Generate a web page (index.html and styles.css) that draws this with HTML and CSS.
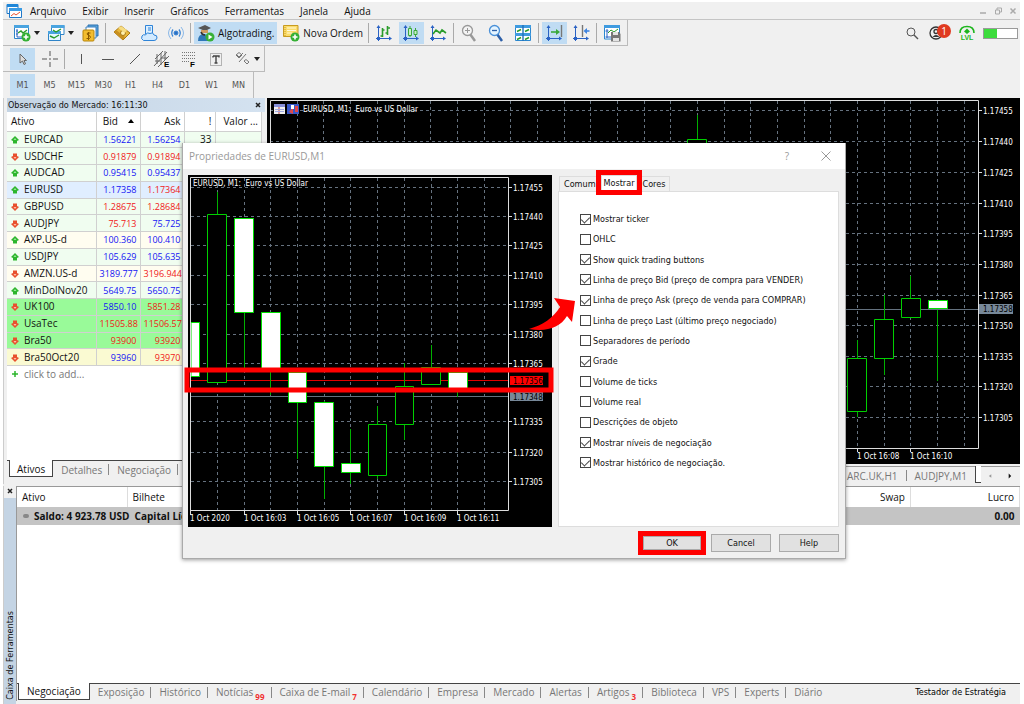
FILE: index.html
```html
<!DOCTYPE html>
<html lang="pt-BR">
<head>
  <meta charset="UTF-8">
  <title>EURUSD,M1</title>
  <link rel="stylesheet" href="styles.css">
</head>
<body>

  <svg class="symbols">
    <symbol id="up" viewBox="0 0 8 8"><path d="M4 0L8 4L6 5V7.500H2V5L0 4Z" fill="#2cb52c"/><path d="M4 2L5.500 4H2.500Z" fill="#9be89b"/></symbol>
    <symbol id="down" viewBox="0 0 8 8"><path d="M4 8L8 4L6 3V.5H2V3L0 4Z" fill="#e8502e"/><path d="M4 6L5.500 4H2.500Z" fill="#ffc0a8"/></symbol>
    <symbol id="caret" viewBox="0 0 6 4"><path d="M0 0H6L3 4Z" fill="#222"/></symbol>
    <symbol id="axes" viewBox="0 0 18 18"><path d="M3.500 2V17M1 14.500H16" stroke="#2a62c4" fill="none"/><path d="M1.500 4L3.500 1L5.500 4ZM14 12.500L17 14.500L14 16.500ZM2 13H5V16H2Z" fill="#2a62c4"/></symbol>
  </svg>

  <div class="app">
    <nav class="menubar">
      <svg class="logo" viewBox="0 0 16 16"><path d="M1 1.500H12V10.500H1Z" fill="#fff" stroke="#1f78c8"/><path d="M1 1H12V4H1Z" fill="#1f86d8"/><path d="M3.500 5.500H15.500V14.500H3.500Z" fill="#fff" stroke="#1f78c8"/><path d="M3 5H16V8H3Z" fill="#3a9be4"/><path d="M5 13L8 10.500L10 12L14 9" stroke="#e85030" fill="none"/></svg>
      <a href="#">Arquivo</a>
      <a href="#">Exibir</a>
      <a href="#">Inserir</a>
      <a href="#">Gráficos</a>
      <a href="#">Ferramentas</a>
      <a href="#">Janela</a>
      <a href="#">Ajuda</a>
      <div class="window-buttons">
        <button aria-label="Minimizar"><svg viewBox="0 0 8 8"><path d="M1 6H7" stroke="#aaa" stroke-width="1.500"/></svg></button>
        <button aria-label="Restaurar"><svg viewBox="0 0 8 8"><path d="M1.500 3H5.500V7H1.500ZM3 3V1H7.500V5H5.500" stroke="#aaa" fill="none"/></svg></button>
        <button aria-label="Fechar"><svg viewBox="0 0 8 8"><path d="M1.500 1.500L6.500 6.500M6.500 1.500L1.500 6.500" stroke="#aaa" stroke-width="1.500"/></svg></button>
      </div>
    </nav>

    <div class="toolbar-row">
      <div class="toolbar">
        <button class="tool drop" aria-label="Novo gráfico">
          <svg viewBox="0 0 18 18"><path d="M1.500 1.500H15.500V14.500H1.500Z" fill="#fff" stroke="#2f84c8"/><path d="M1 1H16V4H1Z" fill="#4aa4e0"/><path d="M4 5V13H9M3 7H5M3 10H5" stroke="#2a62c4" fill="none"/><path d="M5 9L8 7L10 9L14 6" stroke="#2a9c2a" fill="none" stroke-width="1.400"/><circle cx="13" cy="13" r="4.500" fill="#34b034"/><path d="M13 10.500V15.500M10.500 13H15.500" stroke="#fff" stroke-width="1.600"/></svg>
          <svg class="caret"><use href="#caret"/></svg>
        </button>
        <button class="tool drop" aria-label="Perfis">
          <svg viewBox="0 0 18 18"><path d="M4.500 1.500H17V10.500H4.500Z" fill="#fff" stroke="#2f84c8"/><path d="M4 1H17.500V4H4Z" fill="#4aa4e0"/><path d="M1.500 7.500H13.500V16.500H1.500Z" fill="#e6f6ff" stroke="#2f84c8"/><path d="M1 7H14V10H1Z" fill="#4aa4e0"/><path d="M6 6L9 8L14 5M3 12L7 14L12 11" stroke="#2a9c2a" fill="none" stroke-width="1.400"/></svg>
          <svg class="caret"><use href="#caret"/></svg>
        </button>
        <button class="tool" aria-label="Símbolos"><svg viewBox="0 0 18 18"><path d="M6 1H16V12H6Z" fill="#5ba5dc" stroke="#2a70b0"/><path d="M4 3H14V14H4Z" fill="#fff" stroke="#3a80c0"/><rect x="1" y="6" width="11" height="11" rx="1" fill="#f3bd2f" stroke="#b8860b"/><path d="M8.500 9H5.500Q4.500 10 6 11.200L8 12Q9 14 7.500 14.500H4.500M6.500 8V16" stroke="#8a5a00" fill="none"/></svg></button>
        <span class="sep"></span>
        <button class="tool" aria-label="Depósito"><svg viewBox="0 0 18 18"><path d="M1 8L8 2L17 9L10 16Z" fill="#e9b83c" stroke="#a87814"/><path d="M1 8L3 6L12 13L10 16Z" fill="#c99020"/><circle cx="10" cy="9" r="2.500" fill="#fff0b0" stroke="#a87814"/><path d="M5 4L8 2L14 6L12 9" fill="#f6dc82"/></svg></button>
        <button class="tool" aria-label="Nuvem"><svg viewBox="0 0 18 18"><path d="M5.500 1.500H12.500V10H5.500Z" fill="#dcefff" stroke="#2f84d8"/><path d="M8 4H11M8 6H11" stroke="#2f84d8"/><path d="M3.500 16.500Q.5 15 2 12Q3 10 5.500 11Q7 7.500 10 9.500Q13 7.500 14 11Q17.500 11 17 14Q16.500 16.500 14 16.500Z" fill="#d2eaff" stroke="#2f84d8"/></svg></button>
        <button class="tool" aria-label="Sinais"><svg viewBox="0 0 18 18" fill="none" stroke="#3a84d4"><circle cx="9" cy="9" r="2" fill="#2a70c4"/><path d="M6 5.500Q3.500 9 6 12.500M12 5.500Q14.500 9 12 12.500" stroke-width="1.300"/><path d="M4 3Q-1 9 4 15M14 3Q19 9 14 15" stroke="#8ab8e8"/></svg></button>
        <span class="sep"></span>
        <button class="tool wide active">
          <svg viewBox="0 0 18 18"><path d="M1 4L8 1L14 4L8 7Z" fill="#555"/><path d="M4 6V9H11V6" fill="#d09a60"/><path d="M1 17Q1 10 7 10Q12 10 13 17Z" fill="#2f77b8"/><path d="M4 8Q5 11 8 11" stroke="#333" stroke-width="1.500" fill="none"/><circle cx="13" cy="13" r="4.500" fill="#38b038"/><path d="M11.500 10.500L15.500 13L11.500 15.500Z" fill="#fff"/></svg>
          Algotrading.
        </button>
        <button class="tool wide">
          <svg viewBox="0 0 18 18"><path d="M1.500 1.500H16V12.500H1.500Z" fill="#fbdc6a" stroke="#c89b20"/><path d="M5 4H14M5 6.500H14M5 9H10" stroke="#fff8d8"/><path d="M3 3V12" stroke="#c89b20" stroke-dasharray="1 1"/><circle cx="13" cy="13" r="4.500" fill="#34b034"/><path d="M13 10.500V15.500M10.500 13H15.500" stroke="#fff" stroke-width="1.600"/></svg>
          Nova Ordem
        </button>
        <span class="sep"></span>
        <button class="tool" aria-label="Barras"><svg viewBox="0 0 18 18"><use href="#axes"/><path d="M7.500 4V13M5.500 12H7.500M7.500 6H9.500M12.500 2V11M10.500 9H12.500M12.500 4H15" stroke="#2a9c2a" stroke-width="1.600"/></svg></button>
        <button class="tool active" aria-label="Candles"><svg viewBox="0 0 18 18"><use href="#axes"/><path d="M6.500 4.500H9.500V11.500H6.500ZM12 6.500H15V10.500H12ZM8 2V4M8 12V13M13.500 4V6M13.500 11V13" stroke="#3aa83a" fill="#c6f0c6"/></svg></button>
        <button class="tool" aria-label="Linha"><svg viewBox="0 0 18 18"><use href="#axes"/><path d="M4 10L7 6L11 9L13 6L17 9" stroke="#2a9c2a" fill="none" stroke-width="1.600"/></svg></button>
        <span class="sep"></span>
        <button class="tool" aria-label="Ampliar"><svg viewBox="0 0 18 18"><path d="M10 10L15 17" stroke="#999" stroke-width="2.500"/><circle cx="7.500" cy="6.500" r="5" fill="#f4f4f4" stroke="#999" stroke-width="1.300"/><path d="M5 6.500H10M7.500 4V9" stroke="#999"/></svg></button>
        <button class="tool" aria-label="Reduzir"><svg viewBox="0 0 18 18"><path d="M10 10L15 17" stroke="#2c5fa8" stroke-width="2.500"/><circle cx="7.500" cy="6.500" r="5" fill="#e4f4ff" stroke="#4a90d8" stroke-width="1.300"/><path d="M5 6.500H10" stroke="#2c5fa8" stroke-width="1.300"/></svg></button>
        <button class="tool" aria-label="Lado a lado"><svg viewBox="0 0 18 18"><path d="M1.500 1.500H16.500V16.500H1.500Z" fill="#fff" stroke="#2b87d0"/><path d="M1 1H17V4H1ZM1 9H17V12H1Z" fill="#3f9be0"/><path d="M9 1V17" stroke="#2072b8" stroke-width="1.400"/><path d="M3 7.500L7 5.500M11 7.500L15 5.500M3 15.500L7 13.500M11 15.500L15 13.500" stroke="#2a9c2a" stroke-width="1.400"/></svg></button>
        <span class="sep"></span>
        <button class="tool active" aria-label="Rolagem"><svg viewBox="0 0 18 18"><use href="#axes"/><path d="M16.500 1V13" stroke="#777" stroke-width="1.400"/><path d="M6 8H12" stroke="#3aa83a" stroke-width="1.600"/><path d="M11 5L15 8L11 11Z" fill="#3aa83a"/></svg></button>
        <button class="tool" aria-label="Deslocamento"><svg viewBox="0 0 18 18"><use href="#axes"/><path d="M10.500 1V13" stroke="#777" stroke-width="1.400"/><path d="M14 7H17.500" stroke="#3f84e0" stroke-width="1.600"/><path d="M15 4L11.500 7L15 10Z" fill="#3f84e0"/></svg></button>
        <span class="sep"></span>
        <button class="tool" aria-label="Modelos"><svg viewBox="0 0 18 18"><path d="M1.500 1.500H16.500V15H1.500Z" fill="#fff" stroke="#2b87d0"/><path d="M1 1H17V4H1Z" fill="#3f9be0"/><path d="M4 5V14M2.500 7H5.500M2.500 13H8" stroke="#2a62c4"/><path d="M5 9L8 6L11 8L15 5" stroke="#2a9c2a" fill="none"/><path d="M8 8H16L17.500 10V17.500H8Z" fill="#777"/><path d="M10 8H15V11H10ZM10 14H16V17H10Z" fill="#e4e4e4"/></svg></button>
      </div>
      <div class="status">
        <button class="plain" aria-label="Pesquisar"><svg class="search" viewBox="0 0 14 14"><circle cx="6" cy="6" r="4" fill="none" stroke="#555"/><path d="M9 9L13 13" stroke="#555" stroke-width="1.500"/></svg></button>
        <button class="plain profile" aria-label="Mensagens"><svg viewBox="0 0 14 14"><circle cx="7" cy="7" r="6" fill="none" stroke="#333" stroke-width="1.300"/><circle cx="7" cy="5.500" r="2" fill="none" stroke="#333" stroke-width="1.300"/><path d="M3.500 11Q7 7 10.500 11Z" fill="#333"/></svg><span class="badge">1</span></button>
        <div class="level"><svg viewBox="0 0 16 9"><path d="M1 8Q1 1.500 8 1.500Q15 1.500 15 8" fill="none" stroke="#1db51d" stroke-width="1.600"/><path d="M8 3.500L11 6.500L8 9L5 6.500Z" fill="#1db51d"/></svg><span>LVL</span></div>
        <div class="battery"><span></span></div>
      </div>
    </div>

    <div class="toolbar-row">
      <div class="toolbar">
        <button class="tool active" aria-label="Cursor"><svg viewBox="0 0 18 18"><path d="M6 4V13L8.500 11L10 14.500L11.500 13.800L10 10.500H12.500Z" fill="#ddd" stroke="#666"/></svg></button>
        <button class="tool" aria-label="Mira"><svg viewBox="0 0 18 18"><path d="M9 1V6M9 12V17M1 9H6M12 9H17M9 8V10" stroke="#555"/></svg></button>
        <span class="sep"></span>
        <button class="tool" aria-label="Linha vertical"><svg viewBox="0 0 18 18"><path d="M9.500 4V14" stroke="#555"/></svg></button>
        <button class="tool" aria-label="Linha horizontal"><svg viewBox="0 0 18 18"><path d="M3 9.500H15" stroke="#555"/></svg></button>
        <button class="tool" aria-label="Linha de tendência"><svg viewBox="0 0 18 18"><path d="M4 14L14 4" stroke="#555"/></svg></button>
        <button class="tool" aria-label="Canal equidistante"><svg viewBox="0 0 18 18"><path d="M1 16L14 2M2 9L10 1M5 17L16 6M4 4V14M8 3V15M12 1V10M2 11H7M8 8H14" stroke="#666"/><text x="11" y="17" class="tool-letter">E</text></svg></button>
        <button class="tool" aria-label="Fibonacci"><svg viewBox="0 0 18 18"><path d="M2 2.500H15M2 5.500H15M2 8.500H15M2 11.500H9" stroke="#777" stroke-dasharray="1 1"/><text x="10" y="17" class="tool-letter">F</text></svg></button>
        <button class="tool" aria-label="Texto"><svg viewBox="0 0 18 18"><path d="M3.500 3.500H14.500V15.500H3.500Z" fill="none" stroke="#777" stroke-dasharray="1 1"/><path d="M6 6H12V7.500M6 7.500V6M9 6V13M7.500 13H10.500" fill="none" stroke="#444" stroke-width="1.400"/></svg></button>
        <button class="tool drop" aria-label="Objetos"><svg viewBox="0 0 18 18"><path d="M6 12L13 4" stroke="#777"/><path d="M3 5L6 2.500L9 5L6 8ZM4 5L6 7L10 3M11 11L13 9.500L16 12L14 14Z" fill="none" stroke="#777"/></svg><svg class="caret"><use href="#caret"/></svg></button>
      </div>
    </div>

    <div class="toolbar-row">
      <div class="toolbar timeframes">
        <button class="tool active">M1</button>
        <button class="tool">M5</button>
        <button class="tool">M15</button>
        <button class="tool">M30</button>
        <button class="tool">H1</button>
        <button class="tool">H4</button>
        <button class="tool">D1</button>
        <button class="tool">W1</button>
        <button class="tool">MN</button>
      </div>
    </div>

    <div class="workspace">
      <section class="market">
        <header class="market-title">
          <span>Observação do Mercado: 16:11:30</span>
          <button class="close" aria-label="Fechar painel"><svg viewBox="0 0 8 8"><path d="M2 2L6 6M6 2L2 6" stroke="#222" stroke-width="1.500"/></svg></button>
        </header>
        <table class="quotes">
          <thead>
            <tr><th class="name">Ativo</th><th>Bid <svg class="sort" viewBox="0 0 6 4"><path d="M0 4H6L3 0Z"/></svg></th><th>Ask</th><th>!</th><th>Valor ...</th></tr>
          </thead>
          <tbody>
            <tr><td><svg><use href="#up"/></svg>EURCAD</td><td class="blue">1.56221</td><td class="blue">1.56254</td><td>33</td><td></td></tr>
            <tr><td><svg><use href="#down"/></svg>USDCHF</td><td class="red">0.91879</td><td class="red">0.91894</td><td></td><td></td></tr>
            <tr><td><svg><use href="#up"/></svg>AUDCAD</td><td class="blue">0.95415</td><td class="blue">0.95437</td><td></td><td></td></tr>
            <tr class="selected"><td><svg><use href="#up"/></svg>EURUSD</td><td class="blue">1.17358</td><td class="red">1.17364</td><td></td><td></td></tr>
            <tr><td><svg><use href="#down"/></svg>GBPUSD</td><td class="red">1.28675</td><td class="red">1.28684</td><td></td><td></td></tr>
            <tr><td><svg><use href="#down"/></svg>AUDJPY</td><td class="red">75.713</td><td class="blue">75.725</td><td></td><td></td></tr>
            <tr class="cream"><td><svg><use href="#up"/></svg>AXP.US-d</td><td class="blue">100.360</td><td class="blue">100.410</td><td></td><td></td></tr>
            <tr><td><svg><use href="#up"/></svg>USDJPY</td><td class="blue">105.629</td><td class="blue">105.635</td><td></td><td></td></tr>
            <tr class="cream"><td><svg><use href="#down"/></svg>AMZN.US-d</td><td class="blue">3189.777</td><td class="red">3196.944</td><td></td><td></td></tr>
            <tr><td><svg><use href="#up"/></svg>MinDolNov20</td><td class="blue">5649.75</td><td class="blue">5650.75</td><td></td><td></td></tr>
            <tr class="green"><td><svg><use href="#down"/></svg>UK100</td><td class="blue">5850.10</td><td class="red">5851.28</td><td></td><td></td></tr>
            <tr class="green"><td><svg><use href="#down"/></svg>UsaTec</td><td class="red">11505.88</td><td class="red">11506.57</td><td></td><td></td></tr>
            <tr class="green"><td><svg><use href="#down"/></svg>Bra50</td><td class="red">93900</td><td class="red">93920</td><td></td><td></td></tr>
            <tr class="yellow"><td><svg><use href="#down"/></svg>Bra50Oct20</td><td class="blue">93960</td><td class="red">93970</td><td></td><td></td></tr>
          </tbody>
        </table>
        <button class="add"><svg viewBox="0 0 8 8"><path d="M4 1V7M1 4H7" stroke="#2cb52c" stroke-width="1.500"/></svg>click to add...</button>
        <div class="tabs market-tabs">
          <button class="current">Ativos</button>
          <button>Detalhes</button>
          <button>Negociação</button>
          <button></button>
        </div>
      </section>

      <section class="charts">
        <svg class="chart" viewBox="0 0 753 366" preserveAspectRatio="xMaxYMin slice">
          <path class="grid" d="M3.500 3V350M30.500 3V350M56.500 3V350M83.500 3V350M110.500 3V350M137.500 3V350M163.500 3V350M190.500 3V350M217.500 3V350M243.500 3V350M270.500 3V350M297.500 3V350M323.500 3V350M350.500 3V350M377.500 3V350M403.500 3V350M430.500 3V350M457.500 3V350M483.500 3V350M510.500 3V350M537.500 3V350M563.500 3V350M590.500 3V350M617.500 3V350M643.500 3V350M670.500 3V350M697.500 3V350"/>
          <path class="grid" d="M3 12.500H711M3 43.500H711M3 74.500H711M3 105.500H711M3 135.500H711M3 166.500H711M3 197.500H711M3 227.500H711M3 258.500H711M3 288.500H711M3 319.500H711"/>
          <path class="bid-line" d="M3 211.500H711"/>
          <path class="wick" d="M430.500 17V41M590.500 242V260M590.500 314V319M617.500 197V221M617.500 261V277M643.500 178V200M670.500 212V283"/>
          <path class="bear" d="M420.500 41.500H439.500V100H420.500ZM580.500 260.500H599.500V313.500H580.500ZM607.500 221.500H626.500V260.500H607.500ZM634.500 200.500H653.500V219.500H634.500Z"/>
          <path class="bull" d="M661.500 202.500H680.500V210.500H661.500Z"/>
          <path class="frame" d="M3.500 366V2.500H711.500V350.500H3.500M711 12.500H715M711 43.500H715M711 74.500H715M711 105.500H715M711 135.500H715M711 166.500H715M711 197.500H715M711 227.500H715M711 258.500H715M711 288.500H715M711 319.500H715M590.500 350V354M643.500 350V354"/>
          <g class="chart-icons"><path d="M7 6H18V16H7Z" fill="#f0f0f0"/><path d="M7 6H18V9H7Z" fill="#8890d8"/><path d="M12 9V16" stroke="#c04848"/><path d="M8 11.500H17M8 13.500H17" stroke="#a0a8e0"/><path d="M20 6H32V16H20Z" fill="#3858c8"/><path d="M22 14L26 9V16ZM28 8H31V14H28Z" fill="#e04848"/><path d="M24 7H27V11H24Z" fill="#fff"/></g>
          <g class="chart-text">
            <text x="36" y="14">EURUSD, M1:&#160; Euro vs US Dollar</text>
            <text x="716" y="16">1.17455</text>
            <text x="716" y="47">1.17440</text>
            <text x="716" y="78">1.17425</text>
            <text x="716" y="109">1.17410</text>
            <text x="716" y="139">1.17395</text>
            <text x="716" y="170">1.17380</text>
            <text x="716" y="201">1.17365</text>
            <text x="716" y="231">1.17350</text>
            <text x="716" y="262">1.17335</text>
            <text x="716" y="292">1.17320</text>
            <text x="716" y="323">1.17305</text>
            <text x="590" y="361">1 Oct 16:08</text>
            <text x="643" y="361">1 Oct 16:10</text>
            <rect x="712" y="206" width="34" height="10" class="bid-tag"/>
            <text x="716" y="214" class="tag-text">1.17358</text>
          </g>
        </svg>
        <div class="tabs chart-tabs">
          <button>ARC.UK,H1</button>
          <button>AUDJPY,M1</button>
          <button class="current" aria-label="EURUSD,M1"></button>
          <button class="scroll" aria-label="Anterior"><svg viewBox="0 0 6 6"><path d="M4 1V5L1 3Z" fill="#999"/></svg></button>
          <button class="scroll" aria-label="Próximo"><svg viewBox="0 0 6 6"><path d="M2 0V6L5 3Z" fill="#111"/></svg></button>
        </div>
      </section>
    </div>

    <section class="toolbox">
      <aside class="toolbox-side">
        <button class="close" aria-label="Fechar caixa"><svg viewBox="0 0 8 8"><path d="M2 2L6 6M6 2L2 6" stroke="#222" stroke-width="1.500"/></svg></button>
        <span>Caixa de Ferramentas</span>
      </aside>
      <div class="toolbox-main">
        <table class="trades">
          <thead>
            <tr><th class="asset">Ativo</th><th>Bilhete</th><th class="num">Swap</th><th class="num profit">Lucro</th></tr>
          </thead>
          <tbody>
            <tr><td colspan="3"><i class="dot"></i>Saldo: 4 923.78 USD &nbsp;Capital Líq</td><td class="num">0.00</td></tr>
          </tbody>
        </table>
        <div class="tabs toolbox-tabs">
          <button class="current">Negociação</button>
          <button>Exposição</button>
          <button>Histórico</button>
          <button>Notícias<sub>99</sub></button>
          <button>Caixa de E-mail<sub>7</sub></button>
          <button>Calendário</button>
          <button>Empresa</button>
          <button>Mercado</button>
          <button>Alertas</button>
          <button>Artigos<sub>3</sub></button>
          <button>Biblioteca</button>
          <button>VPS</button>
          <button>Experts</button>
          <button>Diário</button>
          <a href="#" class="tester">Testador de Estratégia</a>
        </div>
      </div>
    </section>
  </div>

  <form class="dialog">
    <header class="dialog-title">
      <span>Propriedades de EURUSD,M1</span>
      <button type="button" class="plain" aria-label="Ajuda">?</button>
      <button type="button" class="plain" aria-label="Fechar"><svg viewBox="0 0 10 10"><path d="M.5 .5L9.500 9.500M9.500 .5L.5 9.500" stroke="#999"/></svg></button>
    </header>
    <div class="dialog-body">
      <svg class="preview" viewBox="0 0 364 352">
        <rect width="364" height="352"/>
        <path class="grid" d="M29.500 3V335M56.500 3V335M82.500 3V335M109.500 3V335M136.500 3V335M162.500 3V335M189.500 3V335M216.500 3V335M243.500 3V335M269.500 3V335M296.500 3V335"/>
        <path class="grid" d="M3 12.500H320M3 41.500H320M3 70.500H320M3 100.500H320M3 129.500H320M3 159.500H320M3 188.500H320M3 246.500H320M3 277.500H320M3 306.500H320"/>
        <path class="ask-line" d="M3 205.500H320"/>
        <path class="bid-line" d="M3 221.500H320"/>
        <path class="wick" d="M29.500 17V39M56.500 137V197M82.500 195V220M109.500 227V284M136.500 226V324M162.500 254V309M189.500 231V249M189.500 300V304M216.500 188V211M216.500 249V265M243.500 170V192M269.500 213V222"/>
        <path class="bear" d="M19.500 39.500H38.500V207.500H19.500ZM180.500 249.500H198.500V300.500H180.500ZM207.500 211.500H225.500V249.500H207.500ZM233.500 192.500H252.500V209.500H233.500Z"/>
        <path class="bull" d="M3 147.500H11.500V201.500H3ZM46.500 43.500H65.500V137.500H46.500ZM73.500 137.500H92.500V195.500H73.500ZM100.500 197.500H118.500V227.500H100.500ZM126.500 227.500H145.500V291.500H126.500ZM153.500 288.500H172.500V297.500H153.500ZM260.500 197.500H279.500V213.500H260.500Z"/>
        <path class="frame" d="M2.500 335.500V2.500H320.500V335.500ZM320 12.500H324M320 41.500H324M320 70.500H324M320 100.500H324M320 129.500H324M320 159.500H324M320 188.500H324M320 246.500H324M320 277.500H324M320 306.500H324M2.500 335V340M56.500 335V340M109.500 335V340M162.500 335V340M216.500 335V340M269.500 335V340"/>
        <g class="chart-text">
          <text x="5" y="11">EURUSD, M1:&#160; Euro vs US Dollar</text>
          <text x="325" y="16">1.17455</text>
          <text x="325" y="45">1.17440</text>
          <text x="325" y="74">1.17425</text>
          <text x="325" y="104">1.17410</text>
          <text x="325" y="133">1.17395</text>
          <text x="325" y="163">1.17380</text>
          <text x="325" y="192">1.17365</text>
          <text x="325" y="250">1.17335</text>
          <text x="325" y="281">1.17320</text>
          <text x="325" y="310">1.17305</text>
          <text x="2" y="346">1 Oct 2020</text>
          <text x="56" y="346">1 Oct 16:03</text>
          <text x="109" y="346">1 Oct 16:05</text>
          <text x="162" y="346">1 Oct 16:07</text>
          <text x="216" y="346">1 Oct 16:09</text>
          <text x="269" y="346">1 Oct 16:11</text>
          <rect x="322" y="201" width="33" height="9" class="ask-tag"/>
          <rect x="322" y="217" width="33" height="9" class="bid-tag"/>
          <text x="325" y="209" class="tag-text">1.17356</text>
          <text x="325" y="225" class="tag-text">1.17348</text>
        </g>
        <rect class="mark" x="-1" y="195" width="364" height="20"/>
      </svg>

      <div class="settings">
        <div class="dialog-tabs">
          <button type="button">Comum</button>
          <button type="button" class="current marked">Mostrar</button>
          <button type="button">Cores</button>
        </div>
        <div class="options">
          <label><input type="checkbox" checked>Mostrar ticker</label>
          <label><input type="checkbox">OHLC</label>
          <label><input type="checkbox" checked>Show quick trading buttons</label>
          <label><input type="checkbox" checked>Linha de preço Bid (preço de compra para VENDER)</label>
          <label><input type="checkbox" checked>Linha de preço Ask (preço de venda para COMPRAR)</label>
          <label><input type="checkbox">Linha de preço Last (último preço negociado)</label>
          <label><input type="checkbox">Separadores de período</label>
          <label><input type="checkbox" checked>Grade</label>
          <label><input type="checkbox">Volume de ticks</label>
          <label><input type="checkbox">Volume real</label>
          <label><input type="checkbox">Descrições de objeto</label>
          <label><input type="checkbox" checked>Mostrar níveis de negociação</label>
          <label><input type="checkbox" checked>Mostrar histórico de negociação.</label>
        </div>
      </div>
      <svg class="arrow" viewBox="0 0 48 34"><path d="M0 31C14 27 24 20 31 9L25 0L46 3L43 24L38 18C31 30 17 34 0 31Z" fill="#f00"/></svg>
    </div>
    <footer class="dialog-buttons">
      <button type="button" class="marked">OK</button>
      <button type="button">Cancel</button>
      <button type="button">Help</button>
    </footer>
  </form>

</body>
</html>
```
FILE: styles.css
```css
* {
  box-sizing: border-box;
}

body {
  margin: 0;
  background: #fff;
  font-family: "Open Sans", "Noto Sans", sans-serif;
  font-size: 10px;
  line-height: 14px;
  color: #111;
}

button {
  font: inherit;
  color: inherit;
  background: none;
  border: 0;
  padding: 0;
}

a {
  color: inherit;
  text-decoration: none;
}

table {
  border-collapse: collapse;
}

.symbols {
  display: none;
}

.app {
  display: flex;
  flex-direction: column;
  height: 100vh;
  padding: 2px 4px 0 3px;
  background: linear-gradient(#f0f0f0, #f0f0f0) content-box, #fff;
}

/* Menu */
.menubar {
  display: flex;
  align-items: center;
  gap: 16px;
  height: 18px;
  padding: 0 3px;
  border-bottom: 1px solid #c4c4c4;
}

.logo {
  width: 16px;
  height: 16px;
  margin-right: -8px;
}

.window-buttons {
  display: flex;
  gap: 7px;
  margin-left: auto;
}

.window-buttons svg,
.close svg {
  display: block;
  width: 8px;
  height: 8px;
}

/* Toolbars */
.toolbar-row {
  display: flex;
  justify-content: space-between;
}

.toolbar {
  display: flex;
  align-items: center;
  gap: 2px;
  height: 26px;
  padding: 0 2px 0 7px;
  border-right: 1px solid #bbb;
  border-bottom: 1px solid #bbb;
}

.tool {
  display: flex;
  align-items: center;
  justify-content: center;
  gap: 3px;
  width: 25px;
  height: 22px;
}

.tool svg {
  flex: none;
  width: 18px;
  height: 18px;
  overflow: visible;
}

.tool .caret {
  width: 6px;
  height: 4px;
}

.tool.drop {
  width: 32px;
}

.tool.wide {
  width: auto;
  padding: 0 3px;
}

.tool.active {
  background: #c0dcf3;
}

.tool-letter {
  font: bold 8px "Liberation Sans", sans-serif;
}

.sep {
  width: 1px;
  height: 20px;
  margin-right: 1px;
  background: #aaa;
}

.timeframes {
  font-family: "DejaVu Sans Condensed", sans-serif;
  font-size: 9px;
  color: #555;
  border-bottom: 0;
}

.status {
  display: flex;
  align-items: center;
  gap: 8px;
  padding-right: 2px;
}

.plain {
  display: flex;
}

.search {
  width: 14px;
  height: 14px;
}

.profile {
  position: relative;
  width: 24px;
  padding: 0 2px;
}

.profile svg {
  width: 14px;
  height: 14px;
}

.badge {
  position: absolute;
  top: -2px;
  right: 0;
  width: 14px;
  height: 14px;
  border-radius: 7px;
  background: #e03a20;
  color: #fff;
}

.level {
  display: flex;
  flex-direction: column;
  align-items: center;
  width: 16px;
  font: bold 7px "Liberation Sans", sans-serif;
  color: #1db51d;
}

.level svg {
  width: 16px;
  height: 9px;
}

.battery {
  width: 35px;
  height: 11px;
  border: 1px solid #999;
  background: #fff;
}

.battery span {
  display: block;
  width: 13px;
  height: 9px;
  background: #3ddc3d;
}

/* Market watch */
.workspace {
  display: flex;
  gap: 2px;
}

.market {
  display: flex;
  flex-direction: column;
  width: 262px;
  padding-left: 3px;
  border-left: 1px solid #ccc;
}

.market-title {
  display: flex;
  align-items: center;
  justify-content: space-between;
  height: 14px;
  padding-right: 3px;
  padding-left: 1px;
  background: linear-gradient(90deg, #c4d4e4, #d4e2f0);
  font-family: "DejaVu Sans Condensed", sans-serif;
  font-size: 9px;
}

.market-title span {
  white-space: nowrap;
}

.quotes {
  table-layout: fixed;
  width: 255px;
  height: 254px;
  background: #fff;
}

.quotes th,
.quotes td {
  height: 15px;
  padding: 0 3px;
  border: 1px solid #d0d0d0;
  border-left: 0;
  text-align: right;
  font-weight: normal;
  line-height: 13px;
  white-space: nowrap;
}

.quotes th {
  height: 19px;
  border-top: 0;
}

.quotes th:first-child,
.quotes td:first-child {
  width: 89px;
  padding-left: 4px;
  text-align: left;
}

.quotes th:nth-child(2),
.quotes th:nth-child(3) {
  width: 44px;
}

.quotes th:nth-child(4) {
  width: 31px;
}

.quotes .sort {
  width: 6px;
  height: 4px;
  margin: 0 3px 2px 7px;
}

.quotes td {
  background: #f0fdf0;
}

.quotes td svg {
  width: 8px;
  height: 8px;
  margin-right: 5px;
  vertical-align: -1px;
}

.quotes .selected td {
  background: #e0eeff;
}

.quotes .cream td {
  background: #fffdf0;
}

.quotes .green td {
  background: #99fa99;
}

.quotes .yellow td {
  background: #fafad2;
}

.quotes .blue {
  color: #1414f4;
  font-size: 9px;
}

.quotes .red {
  color: #f02018;
  font-size: 9px;
}

.add {
  flex: 1;
  display: flex;
  gap: 5px;
  padding: 1px 4px;
  background: #fff;
  color: #777;
}

.add svg {
  width: 8px;
  height: 8px;
  margin-top: 3px;
}

/* Tab strips */
.tabs {
  display: flex;
  height: 18px;
  border-top: 1px solid #444;
  color: #777;
}

.tabs button {
  display: flex;
  padding: 0 7px;
  line-height: 16px;
  white-space: nowrap;
}

.tabs button + button:not(.current):not(.scroll)::before {
  content: "";
  width: 1px;
  height: 11px;
  margin: 3px 8px 0 -8px;
  background: #888;
}

.tabs .current + button::before {
  visibility: hidden;
}

.tabs .current {
  height: 17px;
  margin-top: -1px;
  border: 1px solid #444;
  border-top: 0;
  background: #fff;
  color: #111;
}

.tabs sub {
  align-self: flex-end;
  margin-left: 2px;
  color: #f03030;
  font-size: 8px;
  font-weight: bold;
  line-height: 9px;
}

.market-tabs {
  height: 23px;
  margin-bottom: 1px;
  padding-left: 2px;
}

.market-tabs button {
  height: 18px;
  line-height: 18px;
}

/* Chart area */
.charts {
  flex: 1;
  display: flex;
  flex-direction: column;
  min-width: 0;
}

.chart {
  display: block;
  width: 100%;
  height: 366px;
  background: #000;
}

.grid {
  fill: none;
  stroke: #66727f;
  stroke-dasharray: 3 3;
}

.frame {
  fill: none;
  stroke: #ddd;
}

.wick {
  stroke: #00b000;
}

.bear {
  fill: #000;
  stroke: #00d000;
}

.bull {
  fill: #fff;
  stroke: #00e000;
}

.bid-line {
  stroke: #64727f;
}

.ask-line {
  stroke: #e00000;
}

.bid-tag {
  fill: #778899;
}

.ask-tag {
  fill: #f00;
}

.chart-text {
  fill: #fff;
  font-family: "DejaVu Sans Condensed", sans-serif;
  font-size: 8px;
}

.chart-text .tag-text {
  fill: #000;
}

.chart-tabs {
  justify-content: flex-end;
  margin-top: 2px;
  padding-right: 1px;
  border-color: #999;
}

.chart-tabs button {
  padding: 0 8px;
  line-height: 18px;
}

.chart-tabs .current {
  width: 6px;
  padding: 0;
  border-right: 0;
}

.tabs .scroll {
  align-items: center;
  width: 19px;
  padding: 0 7px;
}

.scroll svg {
  width: 6px;
  height: 6px;
}

/* Toolbox */
.toolbox {
  flex: 1;
  display: flex;
  margin-top: 2px;
  border-left: 1px solid #ccc;
}

.toolbox-side {
  display: flex;
  flex-direction: column;
  justify-content: space-between;
  width: 12px;
  padding-bottom: 4px;
  background: linear-gradient(#f0f0f0 12px, #c4d4e4 12px);
}

.toolbox-side .close {
  padding: 1px 2px;
}

.toolbox-side span {
  writing-mode: vertical-rl;
  transform: rotate(180deg);
  line-height: 12px;
  font-family: "DejaVu Sans Condensed", sans-serif;
  font-size: 9px;
}

.toolbox-main {
  flex: 1;
  display: flex;
  flex-direction: column;
  justify-content: space-between;
  margin-bottom: 3px;
  border-top: 1px solid #999;
  border-left: 1px solid #999;
  background: #fff;
}

.trades {
  width: 100%;
}

.trades th,
.trades td {
  height: 18px;
  padding: 0 5px;
  text-align: left;
}

.trades th {
  height: 20px;
  border-right: 1px solid #ddd;
  font-weight: normal;
}

.trades .asset {
  width: 110px;
}

.trades .profit {
  width: 109px;
}

.trades .num {
  text-align: right;
}

.trades td {
  background: #c4c4c4;
  font-weight: bold;
}

.dot {
  display: inline-block;
  width: 6px;
  height: 4px;
  margin: 0 5px 2px 1px;
  border-radius: 3px;
  background: #888;
}

.toolbox-tabs {
  height: 18px;
  padding-left: 1px;
  background: #f0f0f0;
}

.toolbox-tabs .current {
  padding: 0 8px;
}

.tester {
  margin-left: auto;
  padding-right: 14px;
  color: #000;
  font-family: "DejaVu Sans Condensed", sans-serif;
  font-size: 9px;
  line-height: 17px;
}

/* Properties dialog, floats over the workspace */
.dialog {
  position: absolute;
  top: 143px;
  left: 182px;
  width: 664px;
  background: #f0f0f0;
  border: 1px solid #aaa;
  border-top: 0;
  box-shadow: 0 1px 4px rgba(0, 0, 0, 0.4);
  font-family: "DejaVu Sans Condensed", sans-serif;
  font-size: 9px;
}

.dialog-title {
  display: flex;
  align-items: center;
  gap: 32px;
  height: 26px;
  padding: 0 14px 0 6px;
  background: #fff;
  color: #999;
  font-family: "Open Sans", sans-serif;
  font-size: 10px;
}

.dialog-title span {
  margin-right: auto;
}

.dialog-title svg {
  width: 10px;
  height: 10px;
}

.dialog-body {
  position: relative;
  display: flex;
  gap: 6px;
  padding: 6px 6px 0 5px;
}

.preview {
  flex: none;
  width: 364px;
  height: 352px;
  overflow: visible;
}

.mark {
  fill: none;
  stroke: #f00;
  stroke-width: 5;
}

.settings {
  flex: 1;
  display: flex;
  flex-direction: column;
}

.dialog-tabs {
  display: flex;
  align-items: flex-end;
  height: 16px;
  padding-left: 1px;
}

.dialog-tabs button {
  height: 15px;
  padding: 0 4px;
  border: 1px solid #ddd;
  border-bottom: 0;
}

.dialog-tabs .current {
  z-index: 1;
  height: 15px;
  margin-bottom: 1px;
  padding: 0 2px;
  background: #fff;
  line-height: 12px;
}

.marked {
  outline: 5px solid #f00;
}

.options {
  flex: 1;
  display: flex;
  flex-direction: column;
  justify-content: space-between;
  padding: 20px 20px 56px 21px;
  border: 1px solid #ddd;
  background: #fff;
}

.options label {
  display: flex;
  align-items: center;
  gap: 2px;
  white-space: nowrap;
}

.options input {
  appearance: none;
  display: flex;
  justify-content: center;
  width: 11px;
  height: 11px;
  margin: 0;
  border: 1px solid #444;
  background: #fff;
}

.options input:checked::after {
  content: "";
  width: 4px;
  height: 7px;
  border: solid #444;
  border-width: 0 1px 1px 0;
  transform: rotate(45deg);
}

.arrow {
  position: absolute;
  top: 129px;
  left: 346px;
  width: 48px;
  height: 34px;
}

.dialog-buttons {
  display: flex;
  justify-content: flex-end;
  gap: 8px;
  padding: 7px 6px 6px;
}

.dialog-buttons button {
  width: 60px;
  height: 18px;
  border: 1px solid #aaa;
  background: #e1e1e1;
}

.dialog-buttons .marked {
  width: 58px;
  height: 14px;
  margin: 2px 2px 2px 0;
  line-height: 12px;
}
```
